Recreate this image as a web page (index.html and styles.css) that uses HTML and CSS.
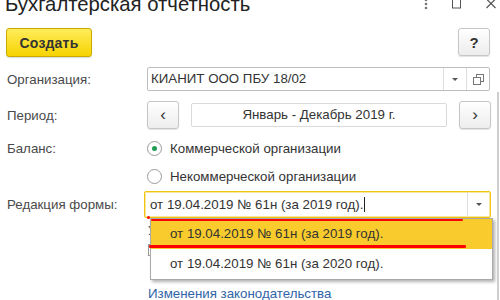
FILE: index.html
```html
<html>
<head>
<meta charset="utf-8">
<link rel="stylesheet" href="styles.css">
</head>
<body>
<div class="head">
  <h1>Бухгалтерская отчетность</h1>
  <div class="winBtns">
    <svg width="4" height="12" viewBox="0 0 4 12"><circle cx="2" cy="2" r="1.3" fill="#777"/><circle cx="2" cy="6" r="1.3" fill="#777"/><circle cx="2" cy="10" r="1.3" fill="#777"/></svg>
    <svg width="10" height="10" viewBox="0 0 10 10"><rect x="0.5" y="-2" width="8" height="10" fill="none" stroke="#555"/></svg>
    <svg width="10" height="10" viewBox="0 0 10 10"><path d="M0.5 -1 L9.5 8 M9.5 -1 L0.5 8" stroke="#555" stroke-width="1.2"/></svg>
  </div>
</div>

<div class="toolbar">
  <button class="create">Создать</button>
  <button class="help">?</button>
</div>

<div class="row r-org">
  <div class="lbl">Организация:</div>
  <div class="field">
    <div class="txt">КИАНИТ ООО ПБУ 18/02</div>
    <div class="fbtn"><span class="tri"></span></div>
    <div class="fbtn">
      <svg width="11" height="11" viewBox="0 0 11 11"><rect x="3.5" y="0.5" width="7" height="7" fill="#fff" stroke="#777"/><rect x="0.5" y="3.5" width="7" height="7" fill="#fff" stroke="#777"/></svg>
    </div>
  </div>
</div>

<div class="row r-period">
  <div class="lbl">Период:</div>
  <button class="nav">&lsaquo;</button>
  <div class="period">Январь - Декабрь 2019 г.</div>
  <button class="nav">&rsaquo;</button>
</div>

<div class="row r-radio first">
  <div class="lbl">Баланс:</div>
  <span class="radio on"></span><span class="rtxt">Коммерческой организации</span>
</div>
<div class="row r-radio">
  <div class="lbl"></div>
  <span class="radio"></span><span class="rtxt">Некоммерческой организации</span>
</div>

<div class="row r-red">
  <div class="lbl">Редакция формы:</div>
  <div class="wrap">
    <div class="field focus">
      <div class="txt">от 19.04.2019 № 61н (за 2019 год).<span class="caret"></span></div>
      <div class="fbtn"><span class="tri"></span></div>
    </div>
    <div class="under">
      <div>У</div>
      <div class="chk"></div>
    </div>
    <div class="popup">
      <div class="item sel">от 19.04.2019 № 61н (за 2019 год).</div>
      <div class="item">от 19.04.2019 № 61н (за 2020 год).</div>
      <span class="mark m1"></span>
      <span class="mark m2"></span>
      <span class="mark m3"></span>
    </div>
  </div>
</div>

<div class="row r-link">
  <div class="lbl"></div>
  <a href="#" class="law">Изменения законодательства</a>
</div>

<div class="scroll"></div>
</body>
</html>
```

FILE: styles.css
```css
* {box-sizing: border-box;}
body {margin: 0; background: #fff; font-family: "Liberation Sans", Arial, sans-serif; font-size: 13.3px; color: #333; overflow: hidden; position: relative; width: 500px; height: 300px;}
.head {display: flex; justify-content: space-between; align-items: flex-start; height: 28px;}
h1 {margin: -9px 0 0 5px; font-weight: normal; font-size: 20.3px; line-height: 26px; color: #222;}
.winBtns {display: flex; align-items: flex-start; gap: 24px; margin-right: 4px;}
.winBtns svg:first-child {margin-top: -2px;}

.toolbar {display: flex; justify-content: space-between; padding: 0 10px 0 6px; height: 29px;}
button {font-family: inherit; cursor: pointer;}
.create {width: 86px; height: 29px; border: 1px solid #c9aa00; border-radius: 3px;
  background: linear-gradient(#ffec5c, #f6d300); font-size: 14px; color: #333; font-weight: bold; letter-spacing: 0.2px;
  box-shadow: 0 1px 1px rgba(0,0,0,.15);}
.help {width: 32px; height: 28px; border: 1px solid #c6c6c6; border-radius: 3px; background: linear-gradient(#fff, #ececec);
  font-size: 15px; color: #333; font-weight: bold; box-shadow: 0 1px 1px rgba(0,0,0,.12);}

.row {display: flex; align-items: center;}
.lbl {width: 147px; padding-left: 7px; color: #4a4a4a; flex: none;}
.r-org {margin-top: 10px; height: 24px;}
.field {display: flex; width: 343px; height: 24px; border: 1px solid #bdbdbd; border-radius: 2px; background: #fff;}
.field .txt {flex: 1; padding-left: 3px; line-height: 22px; white-space: nowrap; overflow: hidden;}
.fbtn {width: 23px; border-left: 1px solid #dedede; display: flex; align-items: center; justify-content: center;}
.tri {width: 0; height: 0; border-left: 3px solid transparent; border-right: 3px solid transparent; border-top: 3px solid #555;}

.r-period {margin-top: 10px; height: 28px;}
.nav {width: 32px; height: 28px; border: 1px solid #c6c6c6; border-radius: 3px; background: linear-gradient(#fff, #ededed);
  font-size: 17px; line-height: 20px; color: #333; padding: 0; box-shadow: 0 1px 1px rgba(0,0,0,.1);}
.period {margin: 0 12px; width: 256px; height: 24px; border: 1px solid #dadada; border-radius: 2px; text-align: center; line-height: 22px;}

.r-radio {height: 28px;}
.r-radio.first {margin-top: 5px;}
.radio {width: 15px; height: 15px; border: 1px solid #9a9a9a; border-radius: 50%; margin-right: 8px; display: flex; align-items: center; justify-content: center; background: #fff;}
.radio.on::after {content: ""; width: 5px; height: 5px; border-radius: 50%; background: #1f9d55;}

.r-red {margin-top: 1px; height: 27px;}
.wrap {position: relative; margin-left: -3px;}
.field.focus {width: 347px; height: 27px; border: 1px solid #f1c40f; box-shadow: inset 0 0 0 1px #fbe6a0;}
.field.focus .txt {padding-left: 5px; line-height: 25px;}
.caret {display: inline-block; width: 1px; height: 15px; background: #222; vertical-align: -3px; margin-left: 1px;}
.under {position: absolute; left: 4px; top: 32px; color: #555;}
.chk {margin-top: 6px; width: 12px; height: 12px; border: 1px solid #999;}
.popup {position: absolute; left: 6px; top: 27px; width: 343px; background: #fff; border: 1px solid #a9a9a9;
  box-shadow: 2px 2px 3px rgba(0,0,0,.3);}
.item {height: 30px; line-height: 30px; padding-left: 19px; color: #333;}
.item.sel {background: #f9cb2c;}
.mark {position: absolute; background: #f00; border-radius: 1px;}
.m1 {left: 0; top: 0; width: 312px; height: 2px;}
.m2 {left: -2px; top: 26px; width: 317px; height: 3px;}
.m3 {left: -4px; top: -3px; width: 3px; height: 3px; border-radius: 50%;}

.r-link {margin-top: 68px;}
.law {color: #2f64a8; text-decoration: none; margin-left: 1px;}
.scroll {position: absolute; left: 497px; top: 92px; width: 2px; height: 208px; background: #cfcfcf;}
```
